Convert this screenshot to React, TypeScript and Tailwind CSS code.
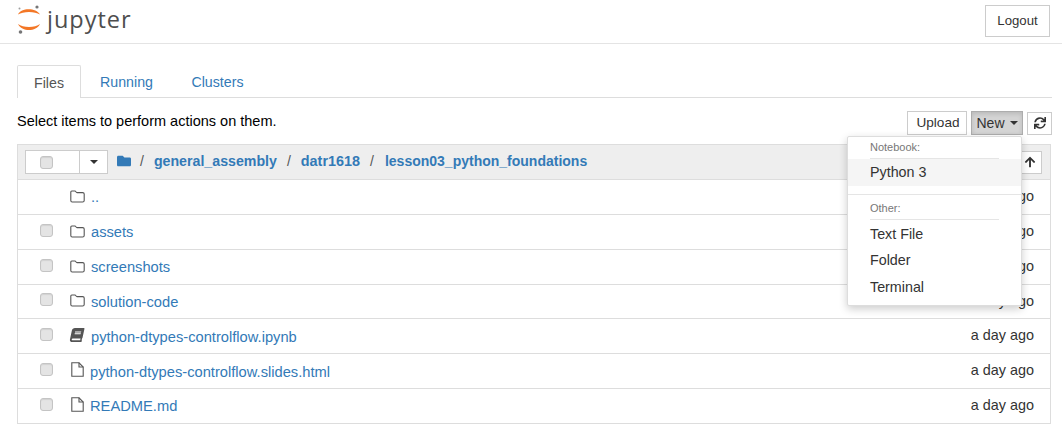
import { FaArrowUp, FaBook, FaFolder, FaSync } from 'react-icons/fa';

const Check = () => (
  <span className="block h-[13px] w-[13px] rounded-[3px] border border-[#c4c4c4] bg-[#e4e4e4] shadow-[inset_0_1px_1px_rgba(0,0,0,0.08)]" />
);

const FolderIcon = () => (
  <svg width="15" height="13" viewBox="0 0 15 13" fill="none" stroke="#555" strokeWidth="1.1">
    <path d="M1.8 1 H5 C5.8 1 6 2.6 7 2.6 H12.6 C13.5 2.6 14.2 3.2 14.2 4 V10.6 C14.2 11.4 13.5 12 12.6 12 H2.2 C1.4 12 .8 11.4 .8 10.6 V2 C.8 1.4 1.2 1 1.8 1 Z" />
  </svg>
);

const FileIcon = () => (
  <svg width="13" height="15" viewBox="0 0 13 15" fill="none" stroke="#555" strokeWidth="1.1" className="-translate-y-[1px]">
    <path d="M.8 .8 H8 L12.2 5 V14.2 H.8 Z" />
    <path d="M8 .8 V5 H12.2" />
  </svg>
);

const rows = [
  { name: '..', icon: 'folder', check: false },
  { name: 'assets', icon: 'folder', check: true },
  { name: 'screenshots', icon: 'folder', check: true },
  { name: 'solution-code', icon: 'folder', check: true },
  { name: 'python-dtypes-controlflow.ipynb', icon: 'book', check: true },
  { name: 'python-dtypes-controlflow.slides.html', icon: 'file', check: true },
  { name: 'README.md', icon: 'file', check: true },
];

const Logo = () => (
  <div className="flex items-center">
    <svg width="25" height="30" viewBox="0 0 25 30">
      <path d="M1 9.5 C4 2.5 19 2.5 23 9.5 C18 6 6 6 1 9.5 Z" fill="#f37726" />
      <path d="M1 19 C6 23 18 23 23 19 C19 27 5 27 1 19 Z" fill="#f37726" />
      <circle cx="20" cy="2" r="1.6" fill="#767677" />
      <circle cx="2.5" cy="3.5" r="1" fill="#9e9e9e" />
      <circle cx="3.5" cy="27" r="1.8" fill="#767677" />
    </svg>
    <span className="ml-[5px] font-['Open_Sans',sans-serif] text-[23.5px] leading-none tracking-[1px] text-[#4e4e4e]">
      jupyter
    </span>
  </div>
);

export default function App() {
  return (
    <div className="h-[445px] w-[1062px] overflow-hidden bg-white font-['Liberation_Sans',Arial,sans-serif] text-[14px] text-[#333]">
      <header className="flex h-[44px] items-start justify-between border-b border-[#e4e4e4] pl-[17px] pr-[12px]">
        <div className="pt-[5px]">
          <Logo />
        </div>
        <button className="mt-[5px] h-[32px] w-[65px] border border-[#ccc] bg-white text-[13.2px]">Logout</button>
      </header>

      <main className="px-[17px] pr-[10px] pt-[21px]">
        <nav className="flex h-[33px] border-b border-[#ddd] text-[14.2px]">
          <div className="flex h-[33px] w-[64px] items-center justify-center rounded-t-[2px] border border-b-0 border-[#ddd] bg-white pt-[3px] text-[#555]">
            Files
          </div>
          <div className="flex h-[32px] w-[91px] items-center justify-center pt-[3px] text-[#337ab7]">Running</div>
          <div className="flex h-[32px] w-[91px] items-center justify-center pt-[3px] text-[#337ab7]">Clusters</div>
        </nav>

        <div className="relative flex h-[46px] items-start justify-between pt-[13px]">
          <p className="text-[14.5px] leading-[20px] text-black">Select items to perform actions on them.</p>
          <div className="flex items-center gap-[4px]">
            <button className="flex h-[24px] w-[60px] items-center justify-center border border-[#ccc] bg-white pl-[2px] text-[13.6px]">
              Upload
            </button>
            <button className="flex h-[24px] w-[52px] items-center justify-center gap-[5px] border border-[#adadad] bg-[#d4d4d4] text-[14px] shadow-[inset_0_2px_4px_rgba(0,0,0,0.125)]">
              New
              <span className="h-0 w-0 border-x-[4px] border-t-[4px] border-x-transparent border-t-[#333]" />
            </button>
            <button className="flex h-[23px] w-[25px] items-center justify-center border border-[#ccc] bg-white">
              <FaSync size={12} />
            </button>
          </div>

          <div className="absolute left-[830px] top-[38px] z-10 h-[170px] w-[175px] rounded-[2px] border border-[#ddd] bg-white text-[14.3px] shadow-[0_3px_8px_rgba(0,0,0,0.2)]">
            <div className="mx-[22px] h-[22px] border-b border-[#e5e5e5] pt-[3px] text-[11px] leading-[14px] text-[#777]">
              Notebook:
            </div>
            <div className="flex h-[27px] items-center bg-[#f5f5f5] px-[22px]">Python 3</div>
            <div className="mt-[8px] border-t border-[#e5e5e5]" />
            <div className="mx-[22px] h-[25px] border-b border-[#e5e5e5] pt-[6px] text-[11px] leading-[14px] text-[#777]">
              Other:
            </div>
            <div className="flex h-[28px] items-center px-[22px] pt-[1px]">Text File</div>
            <div className="flex h-[26px] items-center px-[22px]">Folder</div>
            <div className="flex h-[27px] items-center px-[22px]">Terminal</div>
          </div>
        </div>

        <section className="mr-[1px] border border-[#ddd]">
          <div className="flex h-[35px] items-center justify-between border-b border-[#ddd] bg-[#eee] pl-[7px] pr-[8px]">
            <div className="flex items-center">
              <div className="flex h-[24px] w-[83px] border border-[#ccc] bg-white">
                <div className="flex w-[54px] items-center border-r border-[#ccc] pl-[14px]">
                  <Check />
                </div>
                <div className="flex flex-1 items-center justify-center">
                  <span className="h-0 w-0 border-x-[4px] border-t-[4px] border-x-transparent border-t-[#333]" />
                </div>
              </div>
              <FaFolder size={14} className="ml-[9px] -translate-y-[1px] text-[#337ab7]" />
              <div className="ml-[9px] flex gap-[10px] font-bold text-[#337ab7]">
                <span className="font-normal text-[#555]">/</span>
                <span className="text-[14.2px]">general_assembly</span>
                <span className="font-normal text-[#555]">/</span>
                <span className="text-[14.4px]">datr1618</span>
                <span className="font-normal text-[#555]">/</span>
                <span className="ml-[1px]">lesson03_python_foundations</span>
              </div>
            </div>
            <button className="flex h-[23px] w-[24px] items-center justify-center border border-[#ccc] bg-white">
              <FaArrowUp size={12} />
            </button>
          </div>

          {rows.map((row, i) => (
            <div
              key={row.name}
              className={
                (i === 3 ? 'h-[34px]' : 'h-[35px]') +
                ' flex items-center border-b border-[#ddd] pr-[16px] last:h-[34px] last:border-b-0'
              }
            >
              <div className="flex w-[35px] justify-end -translate-y-[2px]">{row.check && <Check />}</div>
              <div className="ml-[16px] flex w-[16px] justify-center -translate-y-[1px]">
                {row.icon === 'folder' && <FolderIcon />}
                {row.icon === 'book' && <FaBook size={14} className="-skew-x-12 text-[#555]" />}
                {row.icon === 'file' && <FileIcon />}
              </div>
              <a
                className={
                  (row.icon !== 'file' ? 'ml-[6px]' : 'ml-[5px]') +
                  (i >= 3 && i <= 5 ? ' translate-y-[1px]' : '') +
                  ' text-[14.7px] text-[#337ab7]'
                }
              >
                {row.name}
              </a>
              <span className="ml-auto text-[14.4px] text-[#333]">a day ago</span>
            </div>
          ))}
        </section>
      </main>
    </div>
  );
}
